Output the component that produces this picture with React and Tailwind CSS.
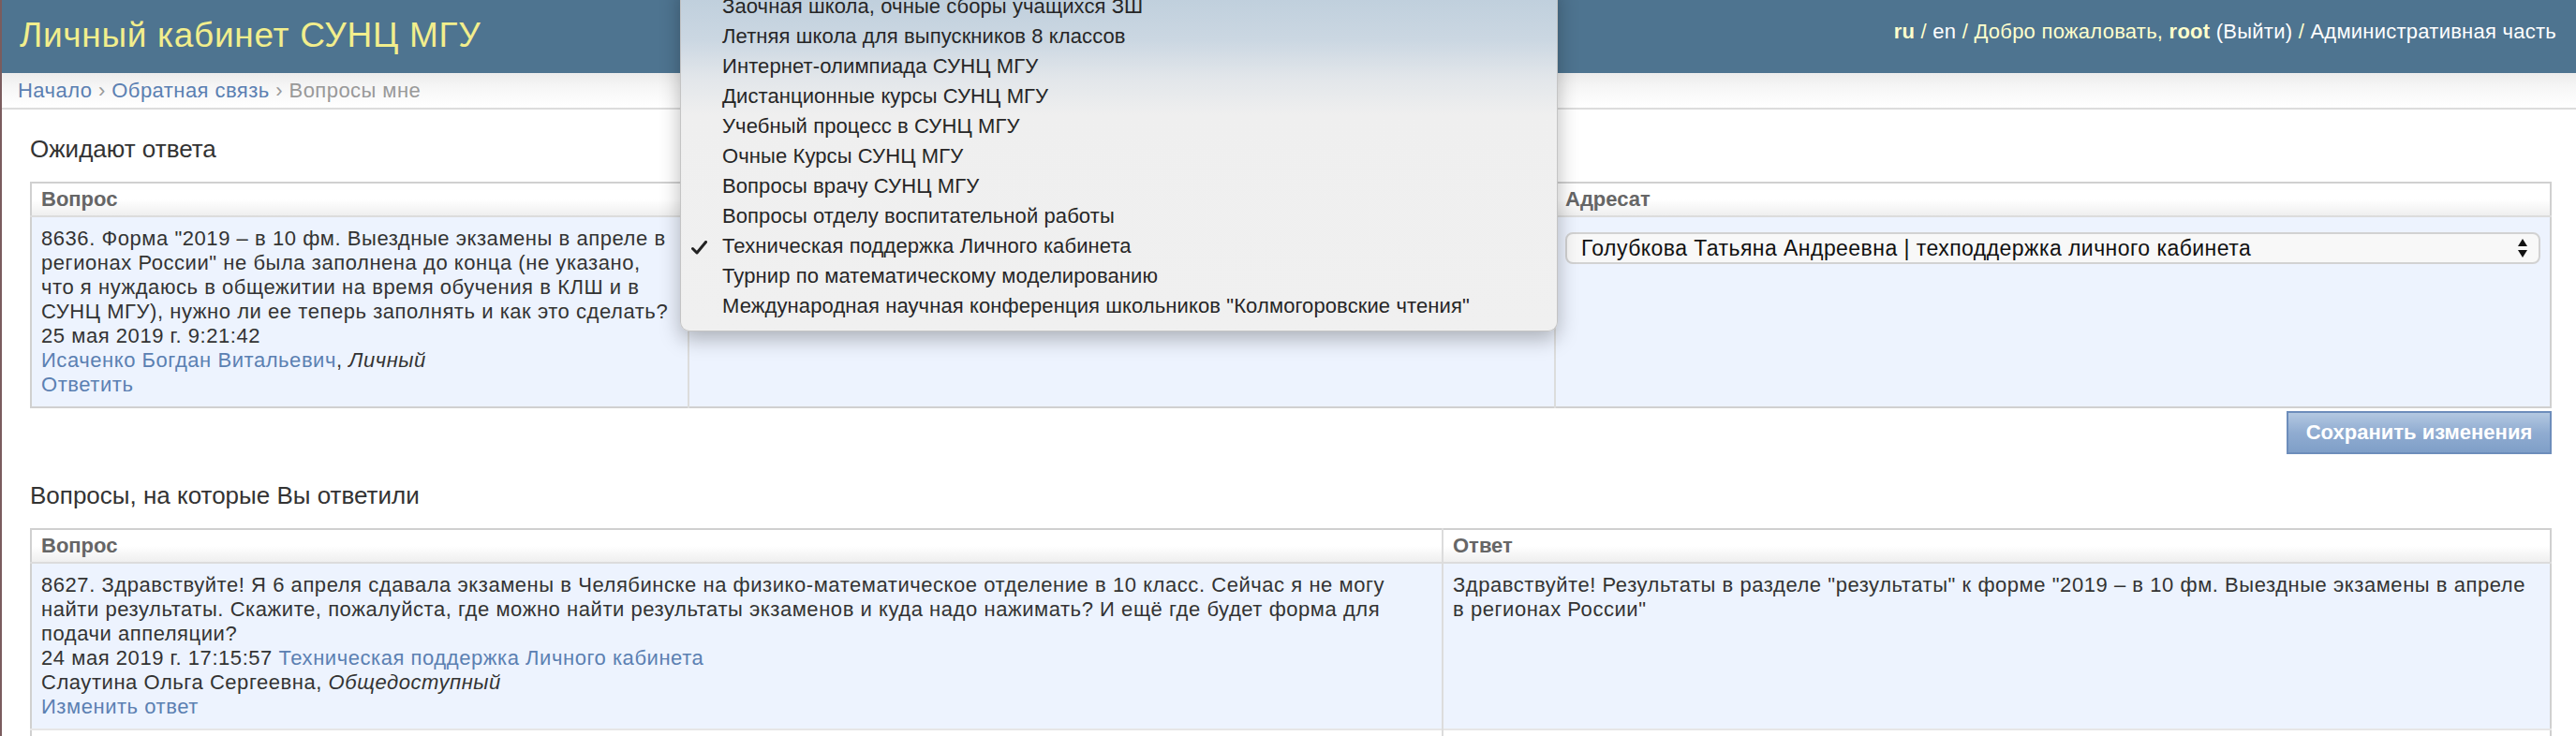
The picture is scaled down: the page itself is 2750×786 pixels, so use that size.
import React from 'react';

const topics = [
  'Заочная школа, очные сборы учащихся ЗШ',
  'Летняя школа для выпускников 8 классов',
  'Интернет-олимпиада СУНЦ МГУ',
  'Дистанционные курсы СУНЦ МГУ',
  'Учебный процесс в СУНЦ МГУ',
  'Очные Курсы СУНЦ МГУ',
  'Вопросы врачу СУНЦ МГУ',
  'Вопросы отделу воспитательной работы',
  'Техническая поддержка Личного кабинета',
  'Турнир по математическому моделированию',
  'Международная научная конференция школьников "Колмогоровские чтения"',
];

function Check() {
  return (
    <svg width="17" height="15" viewBox="0 0 17 15" className="absolute left-[11px] top-[10px]">
      <path d="M1.5 8.5 L6 13 L15.5 1.5" fill="none" stroke="#222" strokeWidth="3" strokeLinecap="round" strokeLinejoin="round" />
    </svg>
  );
}

// native select popup, open over the page
function TopicPopup() {
  return (
    <div className="absolute left-[724px] top-[-17px] w-[937px] rounded-b-[10px] border border-t-0 border-[#c4c4c4] bg-[linear-gradient(180deg,#bccddb_0px,#cbd7e2_60px,#e2e6ea_100px,#efefef_140px,#f0f0f0_100%)] pt-[8px] pb-[10px] shadow-[0_8px_22px_rgba(0,0,0,0.28)] font-['Liberation_Sans',Arial,sans-serif]">
      {topics.map((t, i) => (
        <div key={t} className="relative whitespace-nowrap pl-[44px] text-[22px] leading-[32px] tracking-[0.1px] text-[#262626]">
          {i === 8 && <Check />}
          {t}
        </div>
      ))}
    </div>
  );
}

function SelectArrows() {
  return (
    <svg width="12" height="22" viewBox="0 0 12 22">
      <path d="M6 1 L11 9 L1 9 Z" fill="#111" />
      <path d="M6 21 L11 13 L1 13 Z" fill="#111" />
    </svg>
  );
}

const th = 'px-[10px] py-[4px] text-left font-bold text-[#666] border-b-2 border-[#dcdcdc]';
const td = 'px-[10px] py-[10px] align-top tracking-[0.55px]';

export default function App() {
  return (
    <div className="relative h-[786px] overflow-hidden border-l-2 border-[#7a5c5e] bg-white font-['Liberation_Sans',Arial,sans-serif] text-[22px] leading-[26px] text-[#333]">
      <header className="flex h-[78px] items-center justify-between bg-[#4e7490] pl-[19px] pr-[21px]">
        <h1 className="pb-[4px] text-[37px] leading-none tracking-[0.7px] text-[#f2ee8c]">Личный кабинет СУНЦ МГУ</h1>
        <div className="pb-[10px] text-[22px] tracking-[0.25px] text-[#ffffcc]">
          <b>ru</b> / <span className="text-[#fff]">en</span> / Добро пожаловать, <b>root</b>{' '}
          <span className="text-[#fff]">(Выйти)</span> / <span className="text-[#fff]">Административная часть</span>
        </div>
      </header>

      <nav className="h-[39px] border-b-2 border-[#dcdcdc] bg-[linear-gradient(180deg,#ececec,#f7f7f7_45%,#fff)] pl-[17px] text-[22px] leading-[37px] tracking-[0.45px] text-[#999]">
        <span className="text-[#5b80b2]">Начало</span> › <span className="text-[#5b80b2]">Обратная связь</span> › Вопросы мне
      </nav>

      <main className="pl-[30px] pr-[26px]">
        <h2 className="pt-[27px] pb-[20px] text-[26px] leading-[30px] text-[#333]">Ожидают ответа</h2>

        <table className="w-full table-fixed border-collapse border-2 border-[#d0d0d0]">
          <colgroup>
            <col className="w-[702px]" />
            <col className="w-[925px]" />
            <col />
          </colgroup>
          <thead>
            <tr className="bg-[linear-gradient(180deg,#fff,#fff_50%,#eeeeee)]">
              <th className={th}>Вопрос</th>
              <th className={th + ' border-l-2'}></th>
              <th className={th + ' border-l-2'}>Адресат</th>
            </tr>
          </thead>
          <tbody>
            <tr className="h-[204px] bg-[#edf3fe]">
              <td className={td + ' whitespace-nowrap'}>
                8636. Форма "2019 – в 10 фм. Выездные экзамены в апреле в<br />
                регионах России" не была заполнена до конца (не указано,<br />
                что я нуждаюсь в общежитии на время обучения в КЛШ и в<br />
                СУНЦ МГУ), нужно ли ее теперь заполнять и как это сделать?<br />
                25 мая 2019 г. 9:21:42<br />
                <span className="text-[#5b80b2]">Исаченко Богдан Витальевич</span>, <i>Личный</i>
                <br />
                <span className="text-[#5b80b2]">Ответить</span>
              </td>
              <td className={td + ' border-l-2 border-[#dcdcdc]'}></td>
              <td className={td + ' border-l-2 border-[#dcdcdc]'}>
                <div className="mt-[6px] flex h-[34px] items-center justify-between rounded-[8px] border-2 border-[#d2d2d2] bg-[#f8f8f8] pl-[15px] pr-[11px] text-[23px] tracking-[0.45px] text-[#111]">
                  <span>Голубкова Татьяна Андреевна | техподдержка личного кабинета</span>
                  <SelectArrows />
                </div>
              </td>
            </tr>
          </tbody>
        </table>

        <div className="mt-[3px] flex justify-end">
          <button className="h-[46px] w-[283px] border-2 border-[#6d8dbb] bg-[linear-gradient(180deg,#b3c8e1,#90acd1_50%,#7f9fc8)] text-[22px] font-bold text-white">
            Сохранить изменения
          </button>
        </div>

        <h2 className="pt-[29px] pb-[20px] text-[26px] leading-[30px] text-[#333]">Вопросы, на которые Вы ответили</h2>

        <table className="w-full table-fixed border-collapse border-2 border-[#d0d0d0]">
          <colgroup>
            <col className="w-[1507px]" />
            <col />
          </colgroup>
          <thead>
            <tr className="bg-[linear-gradient(180deg,#fff,#fff_50%,#eeeeee)]">
              <th className={th}>Вопрос</th>
              <th className={th + ' border-l-2'}>Ответ</th>
            </tr>
          </thead>
          <tbody>
            <tr className="bg-[#edf3fe] border-b-2 border-[#e6e6e6]">
              <td className={td + ' whitespace-nowrap'}>
                8627. Здравствуйте! Я 6 апреля сдавала экзамены в Челябинске на физико-математическое отделение в 10 класс. Сейчас я не могу<br />
                найти результаты. Скажите, пожалуйста, где можно найти результаты экзаменов и куда надо нажимать? И ещё где будет форма для<br />
                подачи аппеляции?<br />
                24 мая 2019 г. 17:15:57 <span className="text-[#5b80b2]">Техническая поддержка Личного кабинета</span>
                <br />
                Слаутина Ольга Сергеевна, <i>Общедоступный</i>
                <br />
                <span className="text-[#5b80b2]">Изменить ответ</span>
              </td>
              <td className={td + ' border-l-2 border-[#dcdcdc] whitespace-nowrap'}>
                Здравствуйте! Результаты в разделе "результаты" к форме "2019 – в 10 фм. Выездные экзамены в апреле<br />
                в регионах России"
              </td>
            </tr>
            <tr className="h-[40px] bg-white">
              <td className={td}></td>
              <td className={td + ' border-l-2 border-[#dcdcdc]'}></td>
            </tr>
          </tbody>
        </table>
      </main>

      <TopicPopup />
    </div>
  );
}
